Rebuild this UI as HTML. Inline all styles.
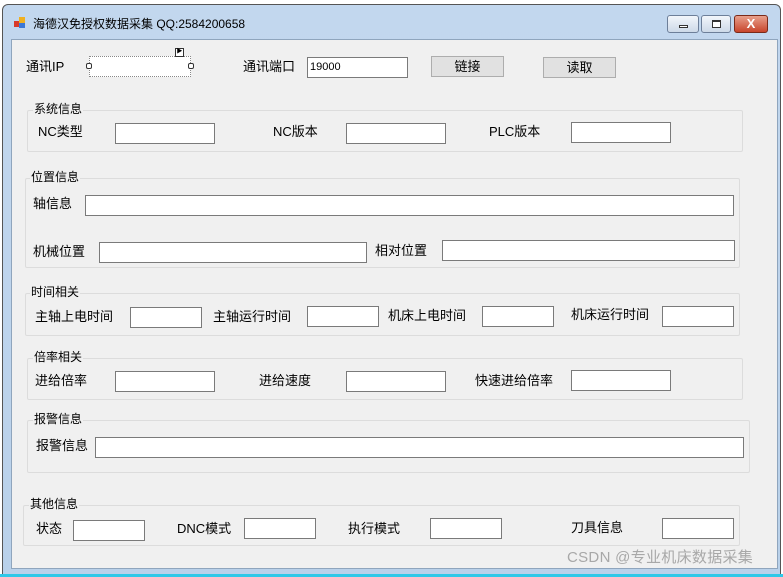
<!DOCTYPE html>
<html><head><meta charset="utf-8"><style>
*{margin:0;padding:0;box-sizing:border-box}
body{width:783px;height:577px;background:#fff;position:relative;overflow:hidden;font-family:"Liberation Sans","Noto Sans CJK SC",sans-serif;font-size:13px;color:#000}
.win{position:absolute;left:2px;top:4px;width:779px;height:571px;background:linear-gradient(#c2d7ee,#b9d1ea);border:1px solid #555;border-radius:6px 6px 0 0}
.client{position:absolute;left:8px;top:34px;width:767px;height:530px;background:#f0f0f0;border:1px solid #8fa5bd}
.a{position:absolute;white-space:nowrap;line-height:16px}
.tb{position:absolute;background:#fff;border:1px solid #7a7a7a;height:21px;font-size:11px;padding:3px 2px}
.gb{position:absolute;border:1px solid #dcdcdc;border-radius:2px}
.gl{position:absolute;background:#f0f0f0;padding:0 1px;font-size:12px;line-height:14px}
.btn{position:absolute;background:#e1e1e1;border:1px solid #adadad;text-align:center;line-height:19px;height:21px}
.cb{position:absolute;top:10px;height:18px;border:1px solid #6d7f99;border-radius:3px;background:linear-gradient(#f2f6fb,#cdd9e8)}
</style></head><body>
<div class="win">
<div class="a" style="left:11px;top:12px;width:11px;height:11px"><div style="position:absolute;left:0;top:4px;width:5px;height:6px;background:#d83a2a"></div><div style="position:absolute;left:5px;top:0;width:6px;height:6px;background:#f0b020"></div><div style="position:absolute;left:5px;top:6px;width:6px;height:5px;background:#3b78d8"></div></div>
<div class="a" style="left:30px;top:11px;font-size:12px">海德汉免授权数据采集 QQ:2584200658</div>
<div class="cb" style="left:664px;width:32px"><div style="position:absolute;left:11px;top:9px;width:9px;height:3px;border:1px solid #333;background:#fff"></div></div>
<div class="cb" style="left:698px;width:30px"><div style="position:absolute;left:10px;top:4px;width:9px;height:8px;border:1px solid #333;border-top-width:2px;background:#fff"></div></div>
<div class="cb" style="left:731px;width:34px;background:linear-gradient(#e8a08c,#c8452c);border-color:#7a2a1a;color:#fff;font-weight:bold;text-align:center;line-height:15px;font-size:13px">X</div>
<div class="client"></div>
</div>

<div class="a" style="left:26px;top:59px">通讯IP</div>
<div class="tb" style="left:89px;top:56px;width:102px;border-style:dotted;border-color:#888"></div>
<div class="a" style="left:86px;top:63px;width:6px;height:6px;border:1px solid #333;border-radius:2px;background:#fff"></div>
<div class="a" style="left:188px;top:63px;width:6px;height:6px;border:1px solid #333;border-radius:2px;background:#fff"></div>
<div class="a" style="left:175px;top:48px;width:9px;height:9px;border:1px solid #333;background:#fff;font-size:6px;line-height:7px;text-align:center">▶</div>
<div class="a" style="left:243px;top:59px">通讯端口</div>
<div class="tb" style="left:307px;top:57px;width:101px">19000</div>
<div class="btn" style="left:431px;top:56px;width:73px">链接</div>
<div class="btn" style="left:543px;top:57px;width:73px">读取</div>

<div class="gb" style="left:27px;top:110px;width:716px;height:42px"></div><div class="gl" style="left:33px;top:102px">系统信息</div>
<div class="a" style="left:38px;top:124px">NC类型</div><div class="tb" style="left:115px;top:123px;width:100px"></div>
<div class="a" style="left:273px;top:124px">NC版本</div><div class="tb" style="left:346px;top:123px;width:100px"></div>
<div class="a" style="left:489px;top:124px">PLC版本</div><div class="tb" style="left:571px;top:122px;width:100px"></div>

<div class="gb" style="left:25px;top:178px;width:715px;height:90px"></div><div class="gl" style="left:30px;top:170px">位置信息</div>
<div class="a" style="left:33px;top:196px">轴信息</div><div class="tb" style="left:85px;top:195px;width:649px"></div>
<div class="a" style="left:33px;top:244px">机械位置</div><div class="tb" style="left:99px;top:242px;width:268px"></div>
<div class="a" style="left:375px;top:243px">相对位置</div><div class="tb" style="left:442px;top:240px;width:293px"></div>

<div class="gb" style="left:25px;top:293px;width:715px;height:43px"></div><div class="gl" style="left:30px;top:285px">时间相关</div>
<div class="a" style="left:35px;top:309px">主轴上电时间</div><div class="tb" style="left:130px;top:307px;width:72px"></div>
<div class="a" style="left:213px;top:309px">主轴运行时间</div><div class="tb" style="left:307px;top:306px;width:72px"></div>
<div class="a" style="left:388px;top:308px">机床上电时间</div><div class="tb" style="left:482px;top:306px;width:72px"></div>
<div class="a" style="left:571px;top:307px">机床运行时间</div><div class="tb" style="left:662px;top:306px;width:72px"></div>

<div class="gb" style="left:27px;top:358px;width:716px;height:42px"></div><div class="gl" style="left:33px;top:350px">倍率相关</div>
<div class="a" style="left:35px;top:373px">进给倍率</div><div class="tb" style="left:115px;top:371px;width:100px"></div>
<div class="a" style="left:259px;top:373px">进给速度</div><div class="tb" style="left:346px;top:371px;width:100px"></div>
<div class="a" style="left:475px;top:373px">快速进给倍率</div><div class="tb" style="left:571px;top:370px;width:100px"></div>

<div class="gb" style="left:27px;top:420px;width:723px;height:53px"></div><div class="gl" style="left:33px;top:412px">报警信息</div>
<div class="a" style="left:36px;top:438px">报警信息</div><div class="tb" style="left:95px;top:437px;width:649px"></div>

<div class="gb" style="left:23px;top:505px;width:717px;height:41px"></div><div class="gl" style="left:29px;top:497px">其他信息</div>
<div class="a" style="left:36px;top:521px">状态</div><div class="tb" style="left:73px;top:520px;width:72px"></div>
<div class="a" style="left:177px;top:521px">DNC模式</div><div class="tb" style="left:244px;top:518px;width:72px"></div>
<div class="a" style="left:348px;top:521px">执行模式</div><div class="tb" style="left:430px;top:518px;width:72px"></div>
<div class="a" style="left:571px;top:520px">刀具信息</div><div class="tb" style="left:662px;top:518px;width:72px"></div>

<div class="a" style="left:567px;top:550px;font-size:15px;color:#a8a8a8;letter-spacing:0.3px">CSDN @专业机床数据采集</div>
<div class="a" style="left:0;top:574px;width:783px;height:3px;background:#2ec8e8"></div>
</body></html>
